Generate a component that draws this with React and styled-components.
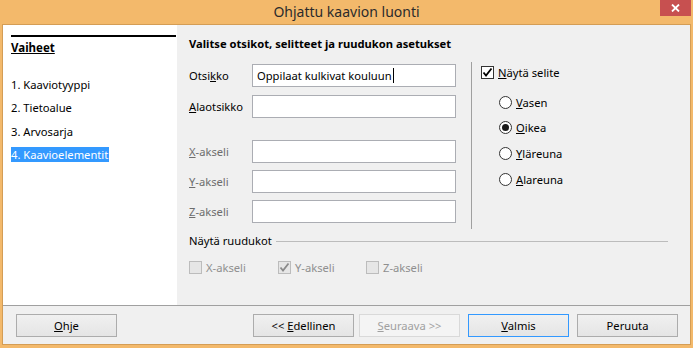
import React from 'react';
import styled, { createGlobalStyle } from 'styled-components';

const GlobalStyle = createGlobalStyle`
  html, body { margin: 0; padding: 0; }
  body {
    font-family: "Noto Sans", "Open Sans", sans-serif;
    font-size: 11.2px;
    color: #000;
    background: #f3b96b;
  }
`;

const Window = styled.div`
  width: 693px;
  height: 348px;
  box-sizing: border-box;
  background: #f3b96b;
  padding: 0 2px 3px 2px;
  display: flex;
  flex-direction: column;
`;

const TitleBar = styled.div`
  height: 24px;
  flex: none;
  position: relative;
  display: flex;
  align-items: center;
  justify-content: center;
  font-size: 14px;
  color: #2b2b2b;
  padding-bottom: 2px;
  box-sizing: border-box;
`;

const CloseButton = styled.div`
  position: absolute;
  top: 0;
  right: 0;
  width: 31px;
  height: 16px;
  background: #c75050;
  display: flex;
  align-items: center;
  justify-content: center;
`;

const Client = styled.div`
  flex: 1;
  border: 1px solid #d49d55;
  background: #f0f0f0;
  display: flex;
  flex-direction: column;
`;

const Main = styled.div`
  height: 280px;
  flex: none;
  display: flex;
  border-bottom: 1px solid #a0a0a0;
`;

const Sidebar = styled.div`
  width: 174px;
  flex: none;
  background: #fff;
  padding: 10px 1px 0 8px;
  box-sizing: border-box;
`;

const SidebarTitle = styled.div`
  border-top: 2px solid #000;
  padding-top: 3px;
  font-size: 11.5px;
  font-weight: bold;
  text-decoration: underline;
  line-height: 16px;
  margin-bottom: 21px;
`;

const StepList = styled.div`
  display: flex;
  flex-direction: column;
  align-items: flex-start;
  gap: 8.3px;
`;

const Step = styled.div`
  line-height: 15px;
  padding: 0 1px 0 0;
  background: ${p => (p.$active ? '#3399ff' : 'transparent')};
  color: ${p => (p.$active ? '#fff' : '#000')};
`;

const Content = styled.div`
  flex: 1;
  padding: 11px 0 0 12px;
  display: flex;
  flex-direction: column;
`;

const Heading = styled.div`
  font-size: 11.2px;
  font-weight: bold;
  line-height: 16px;
  margin-bottom: 2px;
`;

const Upper = styled.div`
  display: flex;
  align-items: flex-start;
`;

const Form = styled.div`
  width: 267px;
  flex: none;
  padding-top: 10px;
  display: flex;
  flex-direction: column;
`;

const FormRow = styled.div`
  display: flex;
  align-items: center;
  height: 23px;
  margin-top: ${p => p.$top || 0}px;
`;

const Label = styled.div`
  width: 63px;
  flex: none;
  color: ${p => (p.$dim ? '#6d6d6d' : '#000')};
`;

const Input = styled.div`
  width: 204px;
  height: 23px;
  box-sizing: border-box;
  border: 1px solid #abadb3;
  background: #fff;
  display: flex;
  align-items: center;
  padding-left: 4px;
`;

const Caret = styled.span`
  display: inline-block;
  width: 1px;
  height: 15px;
  background: #000;
  margin-left: 1px;
`;

const Legend = styled.div`
  margin: 8px 0 0 15px;
  height: 166px;
  border-left: 1px solid #a0a0a0;
  padding: 1px 0 0 9px;
  display: flex;
  flex-direction: column;
`;

const CheckRow = styled.label`
  display: flex;
  align-items: center;
  gap: 4px;
  height: 18px;
  color: ${p => (p.$disabled ? '#8f8f8f' : '#000')};
`;

const Box = styled.span`
  width: 13px;
  height: 13px;
  box-sizing: border-box;
  border: 1px solid ${p => (p.$disabled ? '#bcbcbc' : '#333')};
  background: ${p => (p.$disabled ? '#e6e6e6' : '#fff')};
  display: flex;
  align-items: center;
  justify-content: center;
  flex: none;
`;

const Radios = styled.div`
  display: flex;
  flex-direction: column;
  gap: 7.7px;
  padding: 12px 0 0 18px;
`;

const RadioRow = styled.label`
  display: flex;
  align-items: center;
  gap: 4px;
  height: 18px;
`;

const RadioCircle = styled.span`
  width: 13px;
  height: 13px;
  box-sizing: border-box;
  border-radius: 50%;
  border: 1px solid #333;
  background: #fff;
  display: flex;
  align-items: center;
  justify-content: center;
  flex: none;
  &::after {
    content: '';
    width: 7px;
    height: 7px;
    border-radius: 50%;
    background: ${p => (p.$on ? '#1a1a1a' : 'transparent')};
  }
`;

const GridSection = styled.div`
  margin-top: 4px;
  display: flex;
  flex-direction: column;
  padding-right: 22px;
`;

const SectionHead = styled.div`
  display: flex;
  align-items: center;
  gap: 4px;
  line-height: 16px;
  &::after {
    content: '';
    flex: 1;
    border-top: 1px solid #bcbcbc;
  }
`;

const GridChecks = styled.div`
  display: flex;
  margin-top: 9px;
`;

const GridCheck = styled.div`
  width: ${p => p.$w}px;
`;

const Footer = styled.div`
  flex: 1;
  display: flex;
  align-items: flex-start;
  padding: 8px 0 0 13px;
`;

const Button = styled.div`
  width: 101px;
  height: 23px;
  box-sizing: border-box;
  border: 1px solid ${p => (p.$default ? '#3399ff' : p.$disabled ? '#d9d9d9' : '#acacac')};
  background: ${p => (p.$disabled ? '#f4f4f4' : 'linear-gradient(#f0f0f0, #e5e5e5)')};
  color: ${p => (p.$disabled ? '#a0a0a0' : '#000')};
  display: flex;
  align-items: center;
  justify-content: center;
  margin-left: ${p => p.$gap || 0}px;
  padding-bottom: 1px;
`;

const U = styled.span`
  text-decoration: underline;
`;

const Check = ({ color = '#000' }) => (
  <svg width="11" height="11" viewBox="0 0 11 11">
    <path d="M1.5 5.5 L4 8.5 L9.5 1.5" fill="none" stroke={color} strokeWidth="1.8" />
  </svg>
);

export default function App() {
  return (
    <>
      <GlobalStyle />
      <Window>
        <TitleBar>
          Ohjattu kaavion luonti
          <CloseButton>
            <svg width="9" height="8" viewBox="0 0 9 8">
              <path d="M1 0.5 L8 7.5 M8 0.5 L1 7.5" stroke="#fff" strokeWidth="1.8" />
            </svg>
          </CloseButton>
        </TitleBar>
        <Client>
          <Main>
            <Sidebar>
              <SidebarTitle>Vaiheet</SidebarTitle>
              <StepList>
                <Step>1. Kaaviotyyppi</Step>
                <Step>2. Tietoalue</Step>
                <Step>3. Arvosarja</Step>
                <Step $active>4. Kaavioelementit</Step>
              </StepList>
            </Sidebar>
            <Content>
              <Heading>Valitse otsikot, selitteet ja ruudukon asetukset</Heading>
              <Upper>
                <Form>
                  <FormRow>
                    <Label>Otsi<U>k</U>ko</Label>
                    <Input>Oppilaat kulkivat kouluun<Caret /></Input>
                  </FormRow>
                  <FormRow $top={8}>
                    <Label><U>A</U>laotsikko</Label>
                    <Input />
                  </FormRow>
                  <FormRow $top={22}>
                    <Label $dim><U>X</U>-akseli</Label>
                    <Input />
                  </FormRow>
                  <FormRow $top={7}>
                    <Label $dim><U>Y</U>-akseli</Label>
                    <Input />
                  </FormRow>
                  <FormRow $top={7}>
                    <Label $dim><U>Z</U>-akseli</Label>
                    <Input />
                  </FormRow>
                </Form>
                <Legend>
                  <CheckRow>
                    <Box><Check /></Box>
                    <span><U>N</U>äytä selite</span>
                  </CheckRow>
                  <Radios>
                    <RadioRow><RadioCircle /><span><U>V</U>asen</span></RadioRow>
                    <RadioRow><RadioCircle $on /><span><U>O</U>ikea</span></RadioRow>
                    <RadioRow><RadioCircle /><span><U>Y</U>läreuna</span></RadioRow>
                    <RadioRow><RadioCircle /><span><U>A</U>lareuna</span></RadioRow>
                  </Radios>
                </Legend>
              </Upper>
              <GridSection>
                <SectionHead>Näytä ruudukot</SectionHead>
                <GridChecks>
                  <GridCheck $w={89}>
                    <CheckRow $disabled><Box $disabled /><span>X-akseli</span></CheckRow>
                  </GridCheck>
                  <GridCheck $w={88}>
                    <CheckRow $disabled><Box $disabled><Check color="#8a8a8a" /></Box><span>Y-akseli</span></CheckRow>
                  </GridCheck>
                  <GridCheck $w={90}>
                    <CheckRow $disabled><Box $disabled /><span>Z-akseli</span></CheckRow>
                  </GridCheck>
                </GridChecks>
              </GridSection>
            </Content>
          </Main>
          <Footer>
            <Button><span><U>O</U>hje</span></Button>
            <Button $gap={136}><span>&lt;&lt; <U>E</U>dellinen</span></Button>
            <Button $gap={5} $disabled><span><U>S</U>euraava &gt;&gt;</span></Button>
            <Button $gap={8} $default><span><U>V</U>almis</span></Button>
            <Button $gap={8}>Peruuta</Button>
          </Footer>
        </Client>
      </Window>
    </>
  );
}
